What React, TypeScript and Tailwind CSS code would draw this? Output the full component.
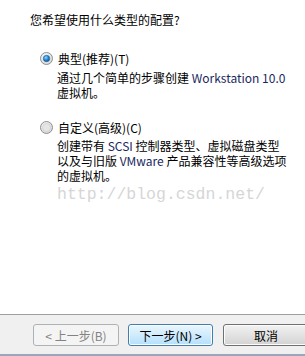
import React from 'react';

const cjk = { fontFamily: '"Noto Sans CJK SC", "Liberation Sans", sans-serif' };

function Radio({ checked }: { checked: boolean }) {
  return (
    <svg width="13" height="13" viewBox="0 0 13 13" className="shrink-0">
      <defs>
        <radialGradient id="ring" cx="0.4" cy="0.35" r="0.7">
          <stop offset="0" stopColor="#ffffff" />
          <stop offset="1" stopColor="#d4d4d4" />
        </radialGradient>
        <radialGradient id="dot" cx="0.4" cy="0.35" r="0.7">
          <stop offset="0" stopColor="#8fd6ff" />
          <stop offset="0.6" stopColor="#1f7fc9" />
          <stop offset="1" stopColor="#0d4f8a" />
        </radialGradient>
      </defs>
      <circle cx="6.5" cy="6.5" r="6" fill="url(#ring)" stroke="#8e8f8f" strokeWidth="1" />
      {checked ? (
        <circle cx="6.5" cy="6.5" r="3.2" fill="url(#dot)" stroke="#1b5f99" strokeWidth="0.6" />
      ) : (
        <circle cx="6.5" cy="6.5" r="4" fill="#e6e6e6" stroke="#c8c8c8" strokeWidth="0.6" />
      )}
    </svg>
  );
}

const L = ({ children }: { children: React.ReactNode }) => (
  <span className="text-[#1a2860]">{children}</span>
);

export default function App() {
  return (
    <div className="flex h-[356px] w-[305px] flex-col overflow-hidden bg-white text-[12px] leading-[15px] text-black" style={cjk}>
      <div className="flex-1">
        <p className="pl-[30px] pt-[12px]">您希望使用什么类型的配置?</p>

        <div className="mt-[24px] flex items-center gap-[5px] pl-[40px]">
          <Radio checked />
          <span>典型(推荐)(T)</span>
        </div>
        <div className="mt-[4px] pl-[57px]">
          <p>
            通过几个简单的步骤创建 <L>Workstation 10.0</L>
          </p>
          <p>虚拟机。</p>
        </div>

        <div className="mt-[20px] flex items-center gap-[5px] pl-[40px]">
          <Radio checked={false} />
          <span>自定义(高级)(C)</span>
        </div>
        <div className="mt-[3px] pl-[57px]">
          <p>
            创建带有 <L>SCSI</L> 控制器类型、虚拟磁盘类型
          </p>
          <p>
            以及与旧版 <L>VMware</L> 产品兼容性等高级选项
          </p>
          <p>的虚拟机。</p>
        </div>
        <p
          className="mt-[2px] pl-[57px] text-[16.5px] leading-[20px] text-[#d6d6d6]"
          style={{ fontFamily: '"Liberation Mono", monospace' }}
        >
          http://blog.csdn.net/
        </p>
      </div>

      <div className="flex h-[42px] items-start border-t border-b-2 border-t-[#a0a0a0] border-b-[#9aa7b8] bg-[#f0f0f0] pt-[9px]">
        <button className="ml-[33px] h-[22px] w-[86px] shrink-0 rounded-[3px] border border-[#adb2b5] bg-[#f4f4f4] text-[#838383]">
          &lt; 上一步(B)
        </button>
        <button className="ml-[9px] h-[22px] w-[85px] shrink-0 rounded-[3px] border border-[#3c7fb1] bg-gradient-to-b from-[#eaf6fd] to-[#b5e0fb] shadow-[inset_0_0_0_1px_#ffffff] text-black">
          下一步(N) &gt;
        </button>
        <button className="ml-[10px] h-[22px] w-[86px] shrink-0 rounded-[3px] border border-[#707070] bg-gradient-to-b from-[#f2f2f2] to-[#d3d3d3] shadow-[inset_0_0_0_1px_#fcfcfc] text-black">
          取消
        </button>
      </div>
    </div>
  );
}
